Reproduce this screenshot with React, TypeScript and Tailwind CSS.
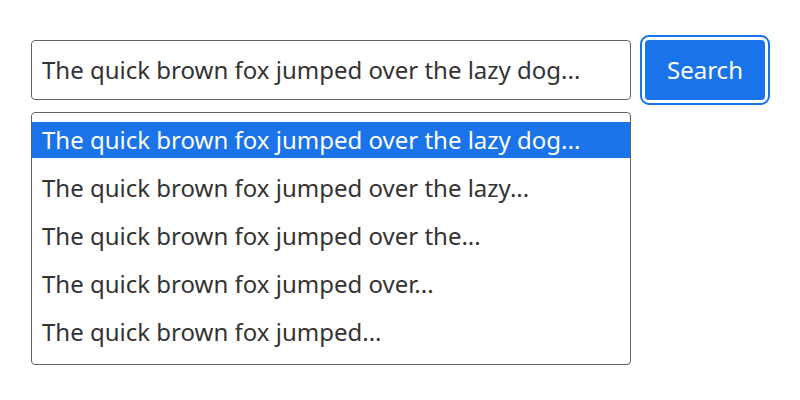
import React from "react";

const items = [
  "The quick brown fox jumped over the lazy dog...",
  "The quick brown fox jumped over the lazy...",
  "The quick brown fox jumped over the...",
  "The quick brown fox jumped over...",
  "The quick brown fox jumped...",
];

export default function App() {
  return (
    <div
      className="w-[800px] h-[400px] bg-white pt-[40px] pl-[31px]"
      style={{ fontFamily: '"Noto Sans", sans-serif' }}
    >
      <div className="flex items-start gap-[14px]">
        <div className="w-[600px] h-[60px] border border-[#5f6368] rounded-[4px] flex items-center pl-[10px] text-[24px] text-[#333]">
          The quick brown fox jumped over the lazy dog...
        </div>
        <button className="w-[120px] h-[60px] rounded-[4px] bg-[#1a73e8] text-white text-[24px] outline-2 outline-solid outline-[#1a73e8] outline-offset-[3px]">
          Search
        </button>
      </div>
      <div className="mt-[12px] w-[600px] border border-[#5f6368] rounded-[4px] pt-[9px] pb-[14px] flex flex-col gap-[12px] text-[24px] text-[#333]">
        {items.map((t, i) => (
          <div
            key={i}
            className={
              "h-[36px] flex items-center pl-[10px] " +
              (i === 0 ? "bg-[#1a73e8] text-white" : "")
            }
          >
            {t}
          </div>
        ))}
      </div>
    </div>
  );
}
